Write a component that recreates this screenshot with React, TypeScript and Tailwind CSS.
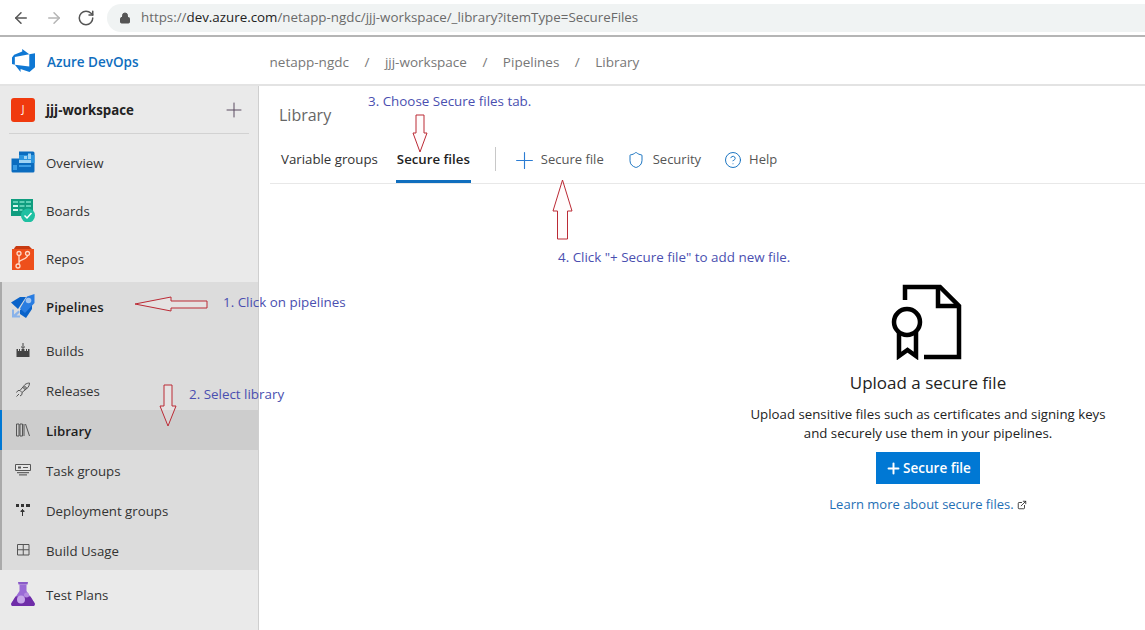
import { ArrowLeft, ArrowRight, RotateCw, Lock, Plus, Shield, CircleHelp, ExternalLink } from "lucide-react";
import type { ReactNode } from "react";

function DevOpsLogo() {
  return (
    <svg width="23" height="23" viewBox="0 0 24 24" fill="#0f78d4">
      <path d="M0 8.877 2.247 5.91l8.405-3.416V.022l7.37 5.393L2.966 8.338v8.225L0 15.707zm24-4.45v14.651l-5.753 4.9-9.303-3.057v3.056l-5.978-7.416 15.057 1.798V5.415z" />
    </svg>
  );
}

function OverviewIcon() {
  return (
    <svg width="24" height="24" viewBox="0 0 24 24">
      <path d="M8 1.5h14A1.5 1.5 0 0 1 23.5 3v18a1.5 1.5 0 0 1-1.5 1.5H2A1.5 1.5 0 0 1 .5 21V8.5H8Z" fill="#0b6cbf" />
      <path d="M8 5h15.5v8H8Z" fill="#2b95df" />
      <path d="M13 6h3v3h-3ZM17 3.5h3V9h-3ZM8 10h12v3H8Z" fill="#9fd3f4" />
      <path d="M8 15h12v2H8ZM2 15h4v5H2Z" fill="#3b9ce4" />
    </svg>
  );
}

function BoardsIcon() {
  return (
    <svg width="24" height="24" viewBox="0 0 24 24">
      <path d="M0 1h22v17H0Z" fill="#0f9d7f" />
      <path d="M2 3h5v2H2ZM8.5 3h5v2h-5ZM15 3h5v2h-5ZM8.5 7h5v2h-5ZM15 7h5v2h-5ZM8.5 11h3v2h-3Z" fill="#5fd0b5" />
      <path d="M2 7h5v2H2ZM2 11h5v2H2Z" fill="#d6f5ee" />
      <circle cx="17" cy="17.5" r="7" fill="#1fc0a2" />
      <path d="m13.5 17.5 2.5 2.5 4.5-5" fill="none" stroke="#fff" strokeWidth="1.5" />
    </svg>
  );
}

function ReposIcon() {
  return (
    <svg width="24" height="24" viewBox="0 0 24 24">
      <path d="M3 2.5 5 0h13l2.5 2.5V5H3Z" fill="#c73a12" />
      <path d="M1 3h22v21H1Z" fill="#ee4f1b" />
      <g fill="none" stroke="#ffd9c8" strokeWidth="1.3">
        <circle cx="8" cy="7.5" r="2" />
        <circle cx="16.5" cy="7.5" r="2" />
        <circle cx="7" cy="20" r="2" />
        <path d="M8 9.5V18M16.5 9.5c0 4-8.5 3.5-8.5 7" />
      </g>
    </svg>
  );
}

function PipelinesIcon() {
  return (
    <svg width="24" height="24" viewBox="0 0 24 24">
      <path d="M0 8.5 9 3h6L7 15Z" fill="#0a63c9" />
      <path d="M9 16 21 6v9l-6 9-6-4Z" fill="#0a63c9" />
      <path d="M23.5 0v9L14 19l-5-4.5L16 2.5Z" fill="#2a7de1" />
      <circle cx="17.5" cy="6.5" r="2.8" fill="#a3c7f2" />
      <path d="M1 15.5v8h8v-2H5.5L9 18l-1.5-1.5L3 20.5v-5Z" fill="#8ab3ea" />
    </svg>
  );
}

function TestPlansIcon() {
  return (
    <svg width="24" height="24" viewBox="0 0 24 24">
      <path d="M7 0h10l-.5 2.5h-9Z" fill="#8a5bc8" />
      <path d="M8.5 2.5h7V9l8 12c.8 1.5 0 3-1.5 3H2c-1.5 0-2.3-1.5-1.5-3l8-12Z" fill="#9a6bd6" />
      <path d="M4.5 14.5h15l4 6.500c.8 1.500 0 3-1.500 3H2c-1.500 0-2.300-1.500-1.500-3Z" fill="#6f2da8" />
      <circle cx="10" cy="17.5" r="4" fill="#c6a6ea" />
      <circle cx="15.5" cy="13" r="2.5" fill="#b48be0" />
    </svg>
  );
}

function BuildsIcon() {
  return (
    <svg width="14" height="14" viewBox="0 0 14 14" fill="#444">
      <path d="M6.5 0h1v4.5h-1ZM5 3l2 2 2-2v1L7 6 5 4ZM1 6h1v2h1V6h1v2h1.5V6h3v2H10V6h1v2h1V6h1.500v8H.5V6Z" />
    </svg>
  );
}

function ReleasesIcon() {
  return (
    <svg width="16" height="16" viewBox="0 0 16 16" fill="none" stroke="#555" strokeWidth="1">
      <path d="M5 8.5 10 2.5C11.5 1.5 13 1 14.5 1c0 1.500-.5 3-1.500 4.500l-6 5Z" />
      <circle cx="10" cy="6" r="1.3" />
      <path d="M5 8.5H3L1.5 10.5M7 10.5v2L5 14M4 12l-2.5 2.5" />
    </svg>
  );
}

function LibraryIcon() {
  return (
    <svg width="14" height="14" viewBox="0 0 14 14" fill="none" stroke="#555" strokeWidth="1">
      <path d="M.5 1H3v12H.5ZM4 1h2.5v12H4ZM8 1v12M9.5 1l4 12" />
    </svg>
  );
}

function TaskGroupsIcon() {
  return (
    <svg width="16" height="12" viewBox="0 0 16 12">
      <path d="M.5.5h15v6H.5Z" fill="#e5e5e5" stroke="#555" />
      <path d="M3 2.5h3v2H3ZM8 3h5v1H8Z" fill="#555" />
      <path d="M2 8h12v1.2H2ZM4 10.3h8v1.2H4Z" fill="#666" />
    </svg>
  );
}

function DeploymentGroupsIcon() {
  return (
    <svg width="14" height="12" viewBox="0 0 14 12" fill="#333">
      <path d="M0 0h3v3H0ZM5 0h3v3H5ZM10 0h4v3h-4ZM6 5h1v7H6ZM4.5 7l2-2 2 2v1h-4Z" />
    </svg>
  );
}

function BuildUsageIcon() {
  return (
    <svg width="13" height="12" viewBox="0 0 13 12" fill="none" stroke="#555" strokeWidth="1">
      <path d="M.5.5H12V11H.5ZM6.25.5V11M.5 5.75H12" />
    </svg>
  );
}

function CertFileIcon() {
  return (
    <svg width="72" height="76" viewBox="0 0 72 76" fill="none" stroke="#000" strokeWidth="4.5">
      <path d="M15 16V3h35l19 19v51H34" />
      <path d="M48 3v19h21" />
      <circle cx="17" cy="38" r="13" />
      <path d="M9 48v24l8.5-6 8.5 6V48" />
    </svg>
  );
}

// red outlined arrows drawn on top of the screenshot
function Arrow({ className, width, height, points }: { className: string; width: number; height: number; points: string }) {
  return (
    <svg className={`absolute ${className}`} width={width} height={height} fill="#fff5f5" fillOpacity="0.25" stroke="#bb2a35" strokeWidth="1">
      <polygon points={points} />
    </svg>
  );
}

function Note({ className, children }: { className: string; children: ReactNode }) {
  return <div className={`absolute text-[13.4px] leading-4 whitespace-nowrap text-[#4a4fb0] ${className}`}>{children}</div>;
}

function NavItem({ icon, label, tall, active, selected }: { icon: ReactNode; label: string; tall?: boolean; active?: boolean; selected?: boolean }) {
  return (
    <div className={`flex items-center pl-[11px] ${tall ? "h-12" : "h-10"} ${selected ? "bg-[#cdcdcd]" : ""}`}>
      <div className="flex w-6 justify-center">{icon}</div>
      <span className={`ml-[11px] pt-[4px] text-[13.25px] ${active ? "font-semibold text-[#1e1e1e]" : "text-[#333]"}`}>{label}</span>
    </div>
  );
}

export default function App() {
  return (
    <div className="relative h-[630px] w-[1145px] overflow-hidden bg-white font-['Open_Sans',sans-serif]">
      {/* Browser bar */}
      <div className="flex h-[37px] items-center border-b-2 border-[#b5b5b5] pl-[12px]">
        <ArrowLeft size={18} className="text-[#555]" />
        <ArrowRight size={18} className="ml-[15px] text-[#b5b5b5]" />
        <RotateCw size={18} className="ml-[14px] text-[#555]" />
        <div className="ml-[12px] flex h-7 flex-1 items-center rounded-l-full bg-[#f0f3f3] pl-[12px]">
          <Lock size={12} className="text-[#555]" fill="#555" />
          <span className="ml-[10px] text-[13.35px] text-[#6a6a6a]">
            https://<span className="text-[#222]">dev.azure.com</span>/netapp-ngdc/jjj-workspace/_library?itemType=SecureFiles
          </span>
        </div>
      </div>

      {/* DevOps header */}
      <div className="flex h-[49px] items-center border-b-2 border-[#e3e3e3]">
        <div className="ml-[12px]">
          <DevOpsLogo />
        </div>
        <span className="ml-[12px] pt-[4px] text-[13.5px] font-semibold text-[#106ebe]">Azure DevOps</span>
        <div className="ml-[131px] flex items-center gap-[15.5px] pt-[4px] text-[13.5px] text-[#777]">
          <span>netapp-ngdc</span>
          <span>/</span>
          <span>jjj-workspace</span>
          <span>/</span>
          <span>Pipelines</span>
          <span>/</span>
          <span>Library</span>
        </div>
      </div>

      <div className="flex h-[544px]">
        {/* Sidebar */}
        <aside className="w-[259px] shrink-0 border-r border-[#cfcfcf] bg-[#eaeaea]">
          <div className="flex h-[47px] items-center pl-[11px] pr-[12px]">
            <div className="flex h-6 w-6 items-center justify-center rounded-[3px] bg-[#f03a0e] text-[10px] text-white">J</div>
            <span className="ml-[11px] flex-1 pt-[2px] text-[13.25px] font-bold text-[#222]">jjj-workspace</span>
            <Plus size={24} strokeWidth={1} className="text-[#5a4a60]" />
          </div>
          <div className="mx-[9px] h-[1px] bg-[#d2d2d2]" />
          <div className="mt-[4px]">
            <NavItem tall icon={<OverviewIcon />} label="Overview" />
            <NavItem tall icon={<BoardsIcon />} label="Boards" />
            <NavItem tall icon={<ReposIcon />} label="Repos" />
          </div>
          <div className="relative bg-[#dcdcdc]">
            <div className="absolute bottom-0 left-0 top-0 w-[2px] bg-[#aaaaaa]" />
            <NavItem tall active icon={<PipelinesIcon />} label="Pipelines" />
            <NavItem icon={<BuildsIcon />} label="Builds" />
            <NavItem icon={<ReleasesIcon />} label="Releases" />
            <div className="relative">
              <div className="absolute bottom-0 left-0 top-0 w-[2px] bg-[#0078d4]" />
              <NavItem selected active icon={<LibraryIcon />} label="Library" />
            </div>
            <NavItem icon={<TaskGroupsIcon />} label="Task groups" />
            <NavItem icon={<DeploymentGroupsIcon />} label="Deployment groups" />
            <NavItem icon={<BuildUsageIcon />} label="Build Usage" />
          </div>
          <NavItem tall icon={<TestPlansIcon />} label="Test Plans" />
        </aside>

        {/* Main */}
        <main className="flex-1">
          <div className="ml-[11px] border-b border-[#e8e8e8]">
            <div className="pl-[9px] pt-[17px] text-[16px] leading-6 text-[#666]">Library</div>
            <div className="mt-[10px] flex h-[46px] items-stretch pl-[11px]">
              <div className="flex items-center text-[13.25px] text-[#333]">Variable groups</div>
              <div className="ml-[18px] flex items-center border-b-[3px] border-[#106ebe] px-[1px] pt-[3px] text-[13.25px] font-semibold text-[#222]">Secure files</div>
              <div className="ml-[24px] mt-[10px] h-[24px] w-[1px] bg-[#c8c8c8]" />
              <div className="ml-[15px] flex items-center text-[13px] text-[#555]">
                <Plus size={27} strokeWidth={1} className="text-[#2b7cd3]" />
                <span className="ml-[3px]">Secure file</span>
                <Shield size={18} strokeWidth={1.25} className="ml-[23px] text-[#106ebe]" />
                <span className="ml-[8px]">Security</span>
                <CircleHelp size={18} strokeWidth={1.25} className="ml-[23px] text-[#106ebe]" />
                <span className="ml-[7px]">Help</span>
              </div>
            </div>
          </div>

          {/* Empty state */}
          <div className="ml-[479px] mt-[100px] flex w-[380px] flex-col items-center">
            <div className="pr-[4px]">
              <CertFileIcon />
            </div>
            <h2 className="mt-[11px] text-[17px] leading-6 text-[#222]">Upload a secure file</h2>
            <p className="mt-[10px] text-center text-[13.25px] leading-[19px] text-[#222]">
              Upload sensitive files such as certificates and signing keys
              <br />
              and securely use them in your pipelines.
            </p>
            <button className="mt-[9px] flex h-8 w-[104px] items-center justify-center gap-[1px] bg-[#0078d4] text-[13.5px] font-semibold text-white">
              <Plus size={17} strokeWidth={2.75} />
              Secure file
            </button>
            <div className="mt-[11px] flex items-center text-[13px] text-[#1f6fb5]">
              Learn more about secure files.
              <ExternalLink size={10} className="ml-[3px] text-[#222]" />
            </div>
          </div>
        </main>
      </div>

      {/* Annotations */}
      <Note className="left-[223px] top-[294px]">1. Click on pipelines</Note>
      <Note className="left-[189px] top-[386px]">2. Select library</Note>
      <Note className="left-[368px] top-[93px]">3. Choose Secure files tab.</Note>
      <Note className="left-[558px] top-[249px]">4. Click "+ Secure file" to add new file.</Note>
      <Arrow className="left-[134px] top-[296px]" width={76} height={16} points="1,8 37,1 37,5 73,5 73,12 37,12 37,15" />
      <Arrow className="left-[158px] top-[384px]" width={20} height={44} points="6,1 14,1 14,22 18,22 10,42 2,22 6,22" />
      <Arrow className="left-[412px] top-[114px]" width={16} height={40} points="4,1 12,1 12,19 15,19 8,38 1,19 4,19" />
      <Arrow className="left-[552px] top-[179px]" width={22} height={62} points="10.5,1 20,32 15.5,32 15.5,60 5.5,60 5.5,32 1,32" />
    </div>
  );
}
